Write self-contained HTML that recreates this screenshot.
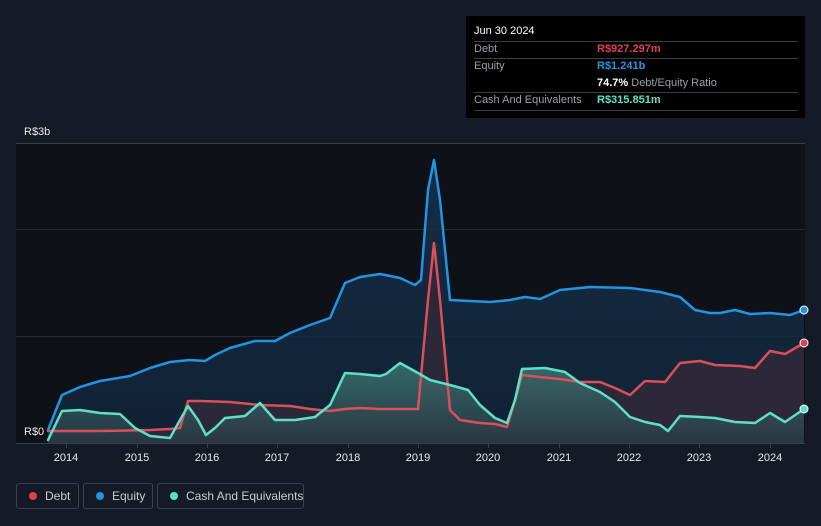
<!DOCTYPE html>
<html><head><meta charset="utf-8"><style>
body{margin:0;width:821px;height:526px;background:#151b26;font-family:"Liberation Sans",sans-serif;overflow:hidden;position:relative}
.tt{position:absolute;left:466px;top:16px;width:339px;height:102px;background:#000;}
.tt .row{position:absolute;left:8px;width:324px;font-size:11px;color:#9aa0a6;white-space:nowrap}
.tt .line{position:absolute;left:8px;width:324px;height:1px;background:#3a3d42}
.v{position:absolute;left:123px;font-weight:bold}
.leg{position:absolute;top:483px;height:26px;border:1px solid #3b414c;border-radius:3px;color:#c9ccd1;font-size:12px;line-height:24px;box-sizing:border-box;white-space:nowrap}
.leg i{position:absolute;left:12px;top:8px;width:8px;height:8px;border-radius:50%}
</style></head><body>
<svg width="821" height="526" style="position:absolute;left:0;top:0">
<defs>
<linearGradient id="ge" x1="0" y1="0" x2="0" y2="1"><stop offset="0" stop-color="#163552" stop-opacity=".8"/><stop offset="1" stop-color="#12253a" stop-opacity=".8"/></linearGradient>
<linearGradient id="gc" x1="0" y1="0" x2="0" y2="1"><stop offset="0" stop-color="#3d7a76" stop-opacity=".8"/><stop offset="1" stop-color="#2a3a44" stop-opacity=".8"/></linearGradient>
</defs>
<rect x="16" y="143" width="789" height="300" fill="#0e1118"/>
<line x1="16" y1="143.5" x2="805" y2="143.5" stroke="#3a3e45"/>
<line x1="16" y1="229.5" x2="805" y2="229.5" stroke="#262b33"/>
<line x1="16" y1="336.5" x2="805" y2="336.5" stroke="#262b33"/>
<polygon fill="url(#ge)" points="48,443 48,430 62,395 80,387 100,381 130,376 150,368 170,362 190,360 205,361 215,355 230,348 255,341 275,341 290,333 310,325 330,318 345,283 360,277 380,274 400,278 415,285 421,280 428,190 434,160 440,200 450,300 470,301 490,302 510,300 525,297 540,299 560,290 590,287 630,288 660,292 680,297 695,310 710,313 720,313 735,310 750,314 770,313 790,315 804,310 804,443"/>
<polygon fill="#2c2838" points="48,443 48,431 100,431 150,430 170,429 180,428 188,401 200,401 230,402 260,405 290,406 310,409 330,411 345,409 360,408 380,409 418,409 428,300 434,243 440,300 450,410 460,420 480,423 495,424 507,427 515,400 522,375 540,377 560,379 580,382 600,382 615,388 630,395 645,381 665,382 680,363 700,361 715,365 740,366 755,368 770,351 785,354 804,343 804,443"/>
<polygon fill="url(#gc)" points="48,443 48,440 62,411 80,410 100,413 120,414 135,428 150,436 170,438 180,420 188,406 198,420 206,435 215,428 225,418 245,416 260,403 275,420 295,420 315,417 330,405 345,373 360,374 380,376 386,374 400,363 418,373 430,380 450,385 468,390 480,405 495,418 507,423 515,400 522,369 545,368 565,372 580,383 600,392 615,402 630,417 645,422 660,425 668,431 680,416 700,417 715,418 735,422 755,423 770,413 785,422 804,409 804,443"/>
<g fill="none" stroke-width="2.5" stroke-linejoin="round" stroke-linecap="round">
<polyline stroke="#2394e0" points="48,430 62,395 80,387 100,381 130,376 150,368 170,362 190,360 205,361 215,355 230,348 255,341 275,341 290,333 310,325 330,318 345,283 360,277 380,274 400,278 415,285 421,280 428,190 434,160 440,200 450,300 470,301 490,302 510,300 525,297 540,299 560,290 590,287 630,288 660,292 680,297 695,310 710,313 720,313 735,310 750,314 770,313 790,315 804,310"/>
<polyline stroke="#d9505a" points="48,431 100,431 150,430 170,429 180,428 188,401 200,401 230,402 260,405 290,406 310,409 330,411 345,409 360,408 380,409 418,409 428,300 434,243 440,300 450,410 460,420 480,423 495,424 507,427 515,400 522,375 540,377 560,379 580,382 600,382 615,388 630,395 645,381 665,382 680,363 700,361 715,365 740,366 755,368 770,351 785,354 804,343"/>
<polyline stroke="#5ee0c8" points="48,440 62,411 80,410 100,413 120,414 135,428 150,436 170,438 180,420 188,406 198,420 206,435 215,428 225,418 245,416 260,403 275,420 295,420 315,417 330,405 345,373 360,374 380,376 386,374 400,363 418,373 430,380 450,385 468,390 480,405 495,418 507,423 515,400 522,369 545,368 565,372 580,383 600,392 615,402 630,417 645,422 660,425 668,431 680,416 700,417 715,418 735,422 755,423 770,413 785,422 804,409"/>
</g>
<circle cx="804" cy="310" r="4" fill="#2394e0" stroke="#fff" stroke-width="1"/>
<circle cx="804" cy="343" r="4" fill="#e0424c" stroke="#fff" stroke-width="1"/>
<circle cx="804" cy="409" r="4" fill="#5ee0c8" stroke="#fff" stroke-width="1"/>
<line x1="16" y1="443.5" x2="805" y2="443.5" stroke="#3a3e45"/>
<g stroke="#3a3e45"><line x1="66.5" y1="443" x2="66.5" y2="448"/><line x1="137.5" y1="443" x2="137.5" y2="448"/><line x1="207.5" y1="443" x2="207.5" y2="448"/><line x1="277.5" y1="443" x2="277.5" y2="448"/><line x1="348.5" y1="443" x2="348.5" y2="448"/><line x1="418.5" y1="443" x2="418.5" y2="448"/><line x1="488.5" y1="443" x2="488.5" y2="448"/><line x1="559.5" y1="443" x2="559.5" y2="448"/><line x1="629.5" y1="443" x2="629.5" y2="448"/><line x1="699.5" y1="443" x2="699.5" y2="448"/><line x1="770.5" y1="443" x2="770.5" y2="448"/></g>
<g fill="#e6e8eb" font-size="11" text-anchor="middle" font-family="Liberation Sans,sans-serif">
<text x="66" y="461">2014</text><text x="137" y="461">2015</text><text x="207" y="461">2016</text><text x="277" y="461">2017</text><text x="348" y="461">2018</text><text x="418" y="461">2019</text><text x="488" y="461">2020</text><text x="559" y="461">2021</text><text x="629" y="461">2022</text><text x="699" y="461">2023</text><text x="770" y="461">2024</text>
</g>
<g fill="#e6e8eb" font-size="11" font-family="Liberation Sans,sans-serif"><text x="24" y="135">R$3b</text><text x="24" y="435">R$0</text></g>
</svg>
<div class="tt">
<div class="row" style="top:9px;color:#fff;font-size:11px">Jun 30 2024</div>
<div class="line" style="top:25px"></div>
<div class="row" style="top:27px">Debt<span class="v" style="color:#e0424c">R$927.297m</span></div>
<div class="line" style="top:42px"></div>
<div class="row" style="top:44px">Equity<span class="v" style="color:#2394e0">R$1.241b</span></div>
<div class="row" style="top:61px"><span class="v" style="color:#fff;left:123px">74.7% <span style="color:#9aa0a6;font-weight:normal">Debt/Equity Ratio</span></span></div>
<div class="line" style="top:76px"></div>
<div class="row" style="top:78px">Cash And Equivalents<span class="v" style="color:#5ee0c8">R$315.851m</span></div>
<div class="line" style="top:94px"></div>
</div>
<div class="leg" style="left:16px;width:63px"><i style="background:#e0424c"></i><span style="position:absolute;left:28px">Debt</span></div>
<div class="leg" style="left:83px;width:70px"><i style="background:#2394e0"></i><span style="position:absolute;left:28px">Equity</span></div>
<div class="leg" style="left:157px;width:147px"><i style="background:#5ee0c8"></i><span style="position:absolute;left:28px">Cash And Equivalents</span></div>
</body></html>
